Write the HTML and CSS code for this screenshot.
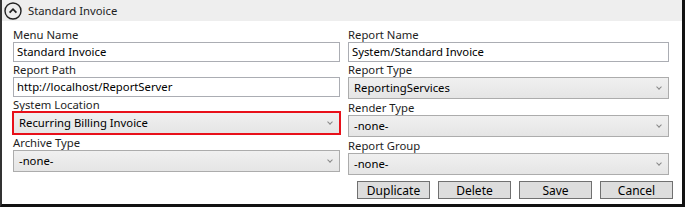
FILE: index.html
```html
<!DOCTYPE html>
<html lang="en">
<head>
    <meta charset="UTF-8">
    <title>Standard Invoice</title>
    <link rel="stylesheet" href="styles.css">
</head>
<body>

    <div class="panel">
        <!-- Panel header -->
        <div class="panel-header">
            <svg class="collapse-icon" width="18" height="18" viewBox="0 0 18 18">
                <circle cx="9" cy="9" r="8" fill="none" stroke="#222" stroke-width="1.4"/>
                <path d="M5.6 10.6 L9 7.2 L12.4 10.6" fill="none" stroke="#222" stroke-width="1.8"/>
            </svg>
            <span class="panel-title">Standard Invoice</span>
        </div>

        <!-- Form fields -->
        <div class="panel-body">
            <div class="col col-left">
                <div class="label">Menu Name</div>
                <div class="text-box">Standard Invoice</div>
                <div class="label">Report Path</div>
                <div class="text-box">http://localhost/ReportServer</div>
                <div class="label">System Location</div>
                <div class="combo invalid">Recurring Billing Invoice<span class="arrow"></span></div>
                <div class="label">Archive Type</div>
                <div class="combo">-none-<span class="arrow"></span></div>
            </div>
            <div class="col">
                <div class="label">Report Name</div>
                <div class="text-box">System/Standard Invoice</div>
                <div class="label">Report Type</div>
                <div class="combo">ReportingServices<span class="arrow"></span></div>
                <div class="label">Render Type</div>
                <div class="combo">-none-<span class="arrow"></span></div>
                <div class="label">Report Group</div>
                <div class="combo">-none-<span class="arrow"></span></div>
            </div>
        </div>

        <!-- Buttons -->
        <div class="buttons">
            <button>Duplicate</button>
            <button>Delete</button>
            <button>Save</button>
            <button>Cancel</button>
        </div>
    </div>

</body>
</html>
```

FILE: styles.css
```css
body {
    margin: 0;
    padding: 0;
    background-color: white;
    font-family: "Noto Sans", Arial, sans-serif;
    font-size: 11.3px;
    color: #1e1e1e;
}
.panel {
    width: 685px;
    height: 207px;
    box-sizing: border-box;
    border-left: 2px solid #333;
    border-right: 3px solid #111;
    border-bottom: 3px solid #111;
    background-color: white;
}
.panel-header {
    height: 21px;
    background-color: #eeeeee;
    display: flex;
    align-items: center;
    padding-left: 2px;
}
.collapse-icon {
    margin-right: 6px;
}
.panel-title {
    color: #1e1e1e;
}
.panel-body {
    display: flex;
    gap: 8px;
    padding: 6px 13px 0 11px;
}
.col {
    flex: 1;
    display: flex;
    flex-direction: column;
}
.col-left {
    flex: none;
    width: 327px;
}
.label {
    height: 15px;
    line-height: 15px;
}
.text-box {
    height: 20px;
    line-height: 18px;
    box-sizing: border-box;
    border: 1px solid #abadb3;
    padding-left: 3px;
    color: #000;
}
.combo {
    position: relative;
    height: 22px;
    line-height: 20px;
    box-sizing: border-box;
    border: 1px solid #acacac;
    background: linear-gradient(#f0f0f0, #e5e5e5);
    padding-left: 5px;
    color: #000;
    margin-bottom: 1px;
}
.combo.invalid {
    border-color: #e8101a;
    outline: 1px solid #e8101a;
}
.arrow {
    position: absolute;
    right: 7px;
    top: 7px;
    width: 3px;
    height: 3px;
    border-right: 1px solid #888;
    border-bottom: 1px solid #888;
    transform: rotate(45deg);
}
.buttons {
    display: flex;
    justify-content: flex-end;
    gap: 8px;
    margin-top: 5px;
    padding-right: 9px;
}
.buttons button {
    width: 73px;
    height: 18px;
    padding: 0;
    font-family: inherit;
    font-size: 12px;
    color: #000;
    background-color: #dddddd;
    border: 1px solid #707070;
    border-radius: 0;
}
```
